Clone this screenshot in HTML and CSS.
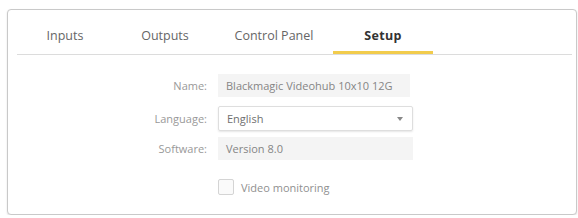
FILE: index.html
```html
<!DOCTYPE html>
<html lang="en">
<head>
  <meta charset="UTF-8" />
  <title>Videohub Setup</title>
  <link rel="stylesheet" href="styles.css">
</head>
<body>
  <div class="panel">
    <div class="tabs">
      <div class="tab">Inputs</div>
      <div class="tab">Outputs</div>
      <div class="tab tab-wide">Control Panel</div>
      <div class="tab active">Setup</div>
    </div>

    <div class="form">
      <div class="row row-name">
        <div class="label">Name:</div>
        <div class="field">Blackmagic Videohub 10x10 12G</div>
      </div>

      <div class="row row-lang">
        <div class="label">Language:</div>
        <div class="select">
          <span>English</span>
          <span class="arrow"></span>
        </div>
      </div>

      <div class="row row-soft">
        <div class="label">Software:</div>
        <div class="field field-wide">Version 8.0</div>
      </div>

      <div class="row row-check">
        <div class="label"></div>
        <label class="check">
          <span class="box"></span>
          <span>Video monitoring</span>
        </label>
      </div>
    </div>
  </div>
</body>
</html>
```

FILE: styles.css
```css
body {
  margin: 0;
  background: #fff;
  font-family: 'Open Sans', 'Noto Sans', sans-serif;
  color: #666;
}
.panel {
  margin: 9px 1px 0 7px;
  height: 206px;
  box-sizing: border-box;
  border: 1px solid #c9c9c9;
  border-radius: 4px;
  box-shadow: 0 1px 2px rgba(0, 0, 0, 0.12);
  background: #fff;
}
.tabs {
  display: flex;
  margin: 0 4px 0 9px;
  border-bottom: 1px solid #dcdcdc;
  height: 44px;
}
.tab {
  width: 100px;
  text-align: center;
  font-size: 12.5px;
  color: #666;
  line-height: 52px;
  height: 43px;
  box-sizing: border-box;
}
.tab:first-child {
  margin-left: -2px;
}
.tab-wide {
  width: 118px;
}
.tab.active {
  font-weight: 700;
  color: #333;
  border-bottom: 3px solid #f2cc4c;
  height: 44px;
  margin-bottom: -1px;
  letter-spacing: 0.3px;
}
.form {
  padding-top: 19px;
}
.row {
  display: flex;
  align-items: center;
  gap: 11px;
}
.row-lang {
  margin-top: 9px;
}
.row-soft {
  margin-top: 6px;
}
.row-check {
  margin-top: 19px;
}
.label {
  width: 199px;
  text-align: right;
  font-size: 11px;
  color: #999;
}
.field {
  width: 192px;
  height: 23px;
  line-height: 23px;
  padding-left: 8px;
  box-sizing: border-box;
  background: #f4f4f4;
  font-size: 11px;
  color: #858585;
}
.field-wide {
  width: 195px;
}
.select {
  display: flex;
  justify-content: space-between;
  align-items: center;
  width: 195px;
  height: 25px;
  padding: 0 9px 0 8px;
  box-sizing: border-box;
  border: 1px solid #dedede;
  border-radius: 2px;
  box-shadow: 0 1px 2px rgba(0, 0, 0, 0.1);
  font-size: 11px;
  color: #707070;
}
.arrow {
  width: 0;
  height: 0;
  border-left: 3px solid transparent;
  border-right: 3px solid transparent;
  border-top: 4px solid #888;
}
.check {
  display: flex;
  align-items: center;
  gap: 7px;
  font-size: 11px;
  color: #909090;
}
.box {
  width: 16px;
  height: 16px;
  box-sizing: border-box;
  border: 1px solid #d4d4d4;
  border-radius: 2px;
  background: #fafafa;
}
```
